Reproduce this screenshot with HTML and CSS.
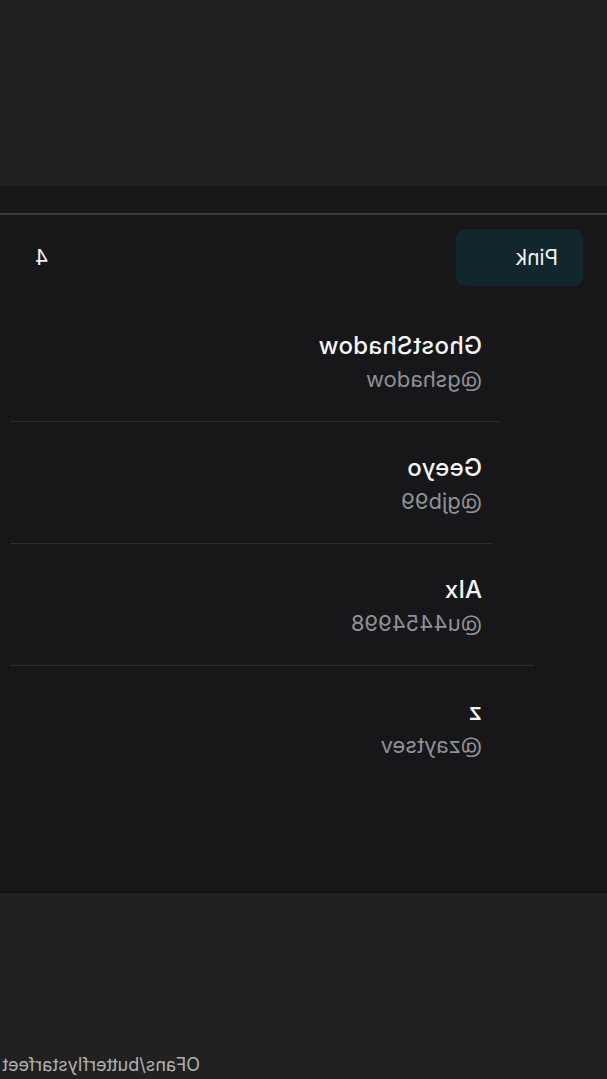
FILE: index.html
```html
<!DOCTYPE html>
<html lang="en">

<head>
    <meta charset="UTF-8">
    <meta name="viewport" content="width=device-width, initial-scale=1.0">
    <title>Members</title>
    <link rel="stylesheet" href="styles.css">
</head>

<body>
    <div class="page">
        <header class="top"></header>

        <main class="panel">
            <div class="panel-head"></div>

            <div class="tabs">
                <button class="tab active">Pink</button>
                <span class="count">4</span>
            </div>

            <ul class="members">
                <li class="member m1">
                    <div class="name">GhostShadow</div>
                    <div class="handle">@gshadow</div>
                </li>
                <li class="member m2">
                    <div class="name">Geeyo</div>
                    <div class="handle">@gjb99</div>
                </li>
                <li class="member m3">
                    <div class="name">Alx</div>
                    <div class="handle">@u4454998</div>
                </li>
                <li class="member m4">
                    <div class="name">z</div>
                    <div class="handle">@zaytsev</div>
                </li>
            </ul>
        </main>

        <footer class="bottom">
            <span class="path">OFans/butterflystarfeet</span>
        </footer>
    </div>
</body>

</html>
```

FILE: styles.css
```css
body {
    margin: 0;
    padding: 0;
    background-color: #212121;
    font-family: Inter, "Noto Sans", sans-serif;
    color: #f2f2f2;
}

/* the capture is mirrored, so is the page */
.page {
    width: 607px;
    height: 1079px;
    display: flex;
    flex-direction: column;
    transform: scaleX(-1);
    overflow: hidden;
}

.top {
    height: 186px;
    background-color: #212121;
}

.panel {
    height: 707px;
    background-color: #171719;
    box-shadow: inset 0 -3px 0 #141416;
}

.panel-head {
    height: 27px;
    border-bottom: 2px solid #39393b;
}

.tabs {
    display: flex;
    align-items: center;
    justify-content: space-between;
    padding: 14px 35px 0 24px;
}

.tab {
    width: 127px;
    height: 57px;
    border: none;
    border-radius: 9px;
    background-color: #12262d;
    color: #f0f0f0;
    font-family: inherit;
    font-size: 21px;
    text-align: left;
    padding: 0 0 0 25px;
}

.count {
    font-size: 21px;
    color: #f0f0f0;
}

.members {
    list-style-type: none;
    margin: 14px 10px 0 0;
    padding: 0;
}

.member {
    padding: 32px 0 29px 18px;
    margin-left: 107px;
    border-bottom: 1px solid #2c2c2f;
}

.member.m2 {
    margin-left: 115px;
    padding-left: 10px;
}

.member.m3 {
    margin-left: 73px;
    padding-left: 52px;
}

.member.m4 {
    border-bottom: none;
}

.name {
    font-size: 24px;
    line-height: 28px;
    font-weight: 500;
    letter-spacing: 0.3px;
    color: #f4f4f4;
}

.handle {
    margin-top: 6px;
    font-size: 22px;
    line-height: 26px;
    color: #8e9098;
}

.bottom {
    flex: 1;
    background-color: #212121;
    display: flex;
    align-items: flex-end;
    justify-content: flex-end;
    padding: 0 2px 0 0;
}

.path {
    font-size: 18px;
    line-height: 28px;
    color: #b0b0b0;
}
```
